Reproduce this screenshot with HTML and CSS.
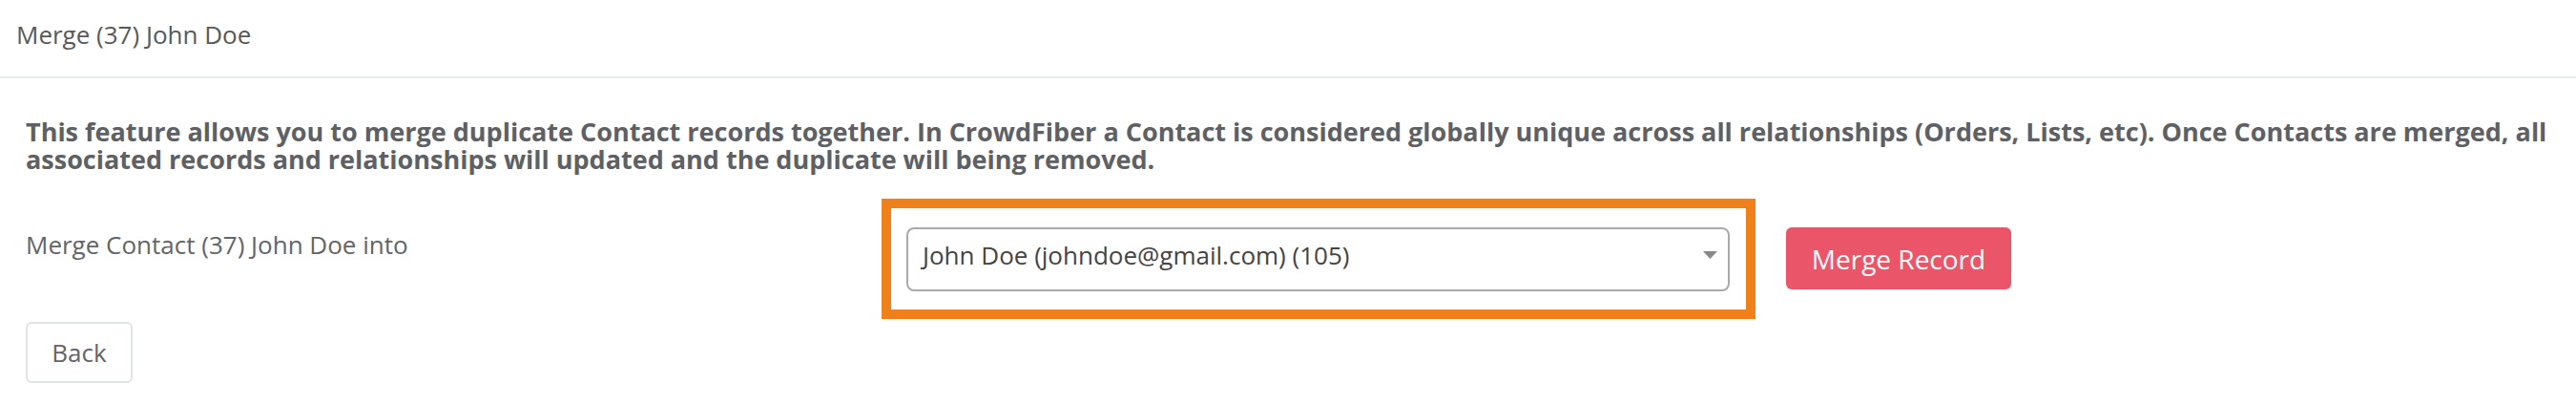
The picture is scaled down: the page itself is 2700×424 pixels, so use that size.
FILE: index.html
```html
<!DOCTYPE html>
<html lang="en">
<head>
    <meta charset="UTF-8">
    <meta name="viewport" content="width=device-width, initial-scale=1.0">
    <title>Merge (37) John Doe</title>
    <link rel="stylesheet" href="styles.css">
</head>
<body>

    <header class="page-header">
        <h1 class="page-title">Merge (37) John Doe</h1>
    </header>

    <main class="content">
        <p class="intro">This feature allows you to merge duplicate Contact records together. In CrowdFiber a Contact is considered globally unique across all relationships (Orders, Lists, etc). Once Contacts are merged, all associated records and relationships will updated and the duplicate will being removed.</p>

        <div class="merge-row">
            <label class="merge-label" for="mergeTarget">Merge Contact (37) John Doe into</label>
            <div class="highlight">
                <div class="select-box" id="mergeTarget">
                    <span>John Doe (johndoe@gmail.com) (105)</span>
                    <svg class="caret" width="15" height="8" viewBox="0 0 15 8"><path d="M0 0 H15 L7.5 8 Z" fill="#888"/></svg>
                </div>
            </div>
            <button class="btn-merge">Merge Record</button>
        </div>

        <button class="btn-back">Back</button>
    </main>

</body>
</html>
```

FILE: styles.css
```css
body {
    font-family: "Open Sans", Arial, sans-serif;
    font-size: 26px;
    margin: 0;
    background-color: #fff;
    color: #626569;
}

.page-header {
    padding: 18px 17px 26px;
    border-bottom: 2px solid #e8ebeb;
}

.page-title {
    margin: 0;
    font-size: 26px;
    font-weight: 400;
    line-height: 36px;
    color: #58595b;
}

.content {
    padding: 0 27px;
}

.intro {
    margin: 41px 0 0;
    font-size: 27px;
    font-weight: 700;
    line-height: 29px;
    color: #5d6064;
}

.merge-row {
    display: flex;
    align-items: flex-start;
    margin-top: 27px;
}

.merge-label {
    width: 897px;
    margin-top: 30px;
    line-height: 36px;
}

/* caja naranja alrededor del select */
.highlight {
    border: 10px solid #f08019;
    padding: 20px 17px 19px 16px;
}

.select-box {
    position: relative;
    width: 863px;
    height: 67px;
    box-sizing: border-box;
    padding: 9px 40px 0 15px;
    border: 2px solid #aaa;
    border-radius: 8px;
    line-height: 36px;
    color: #444;
}

.select-box .caret {
    position: absolute;
    top: 23px;
    right: 11px;
}

.btn-merge {
    width: 236px;
    height: 65px;
    margin: 30px 0 0 32px;
    padding: 0;
    border: none;
    border-radius: 6px;
    background-color: #eb5569;
    color: #fff;
    font-family: inherit;
    font-size: 28px;
    line-height: 36px;
    cursor: pointer;
}

.btn-back {
    display: block;
    width: 112px;
    height: 64px;
    margin-top: 3px;
    padding: 0;
    border: 2px solid #e0e3e3;
    border-radius: 6px;
    background-color: #fff;
    color: #626569;
    font-family: inherit;
    font-size: 26px;
    line-height: 36px;
    cursor: pointer;
}
```
